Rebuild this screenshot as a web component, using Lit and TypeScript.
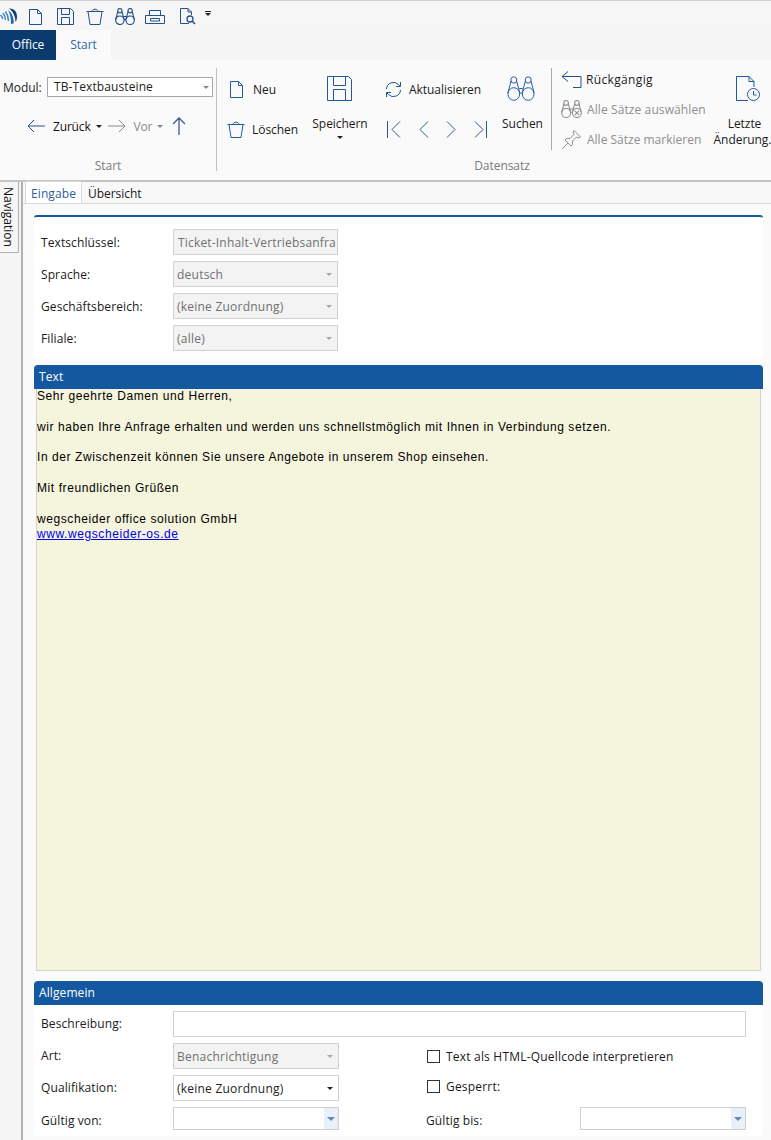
import { LitElement, html, css, svg } from "lit";
import { customElement } from "lit/decorators.js";

const ic = (w: number, h: number, body: unknown, cls = "") =>
  html`<svg class="ic ${cls}" width=${w} height=${h} viewBox="0 0 ${w} ${h}" fill="none" stroke="currentColor" stroke-width="1">${body}</svg>`;

const doc = (w = 13, h = 16) => ic(w, h, svg`<path d="M.5 .5H${w - 4.5}L${w - .5} 4.5V${h - .5}H.5Z"/><path d="M${w - 4.5} .5V4.5H${w - .5}"/>`);
const save = (s = 17) => {
  const k = s - .5;
  const a = Math.round(s * .24) + .5, b = Math.round(s * .7) + .5, c = Math.round(s * .34) + .5, d = Math.round(s * .52) + .5;
  return ic(s, s, svg`<path d="M.5 .5H${k - 3}L${k} 3.5V${k}H.5Z"/><path d="M${a} .5V${c}H${b}V.5M${a} ${k}V${d}H${k - a + .5}V${k}"/>`);
};
const trash = () => ic(18, 17, svg`<path d="M.5 3.5H17.5M2 3.5L4 16.5H14L16 3.5M6 3.5C6 .5 12 .5 12 3.5"/>`);
const binoc = (w: number, h: number, sw: number, mark = false) =>
  html`<svg class="ic" width=${w} height=${h} viewBox="0 0 30 25" fill="none" stroke="currentColor" stroke-width=${sw} preserveAspectRatio="none">
    <circle cx="7.300" cy="18" r="6.300"/><circle cx="22.700" cy="18" r="6.300"/>
    <circle cx="7.300" cy="4" r="3.200"/><circle cx="22.700" cy="4" r="3.200"/>
    <path d="M4.300 5L1 17M10.300 5L13.500 16M25.700 5L29 17M19.700 5L16.500 16M13.200 12.500H16.800M13.500 17H16.500"/>
    ${mark ? svg`<path d="M19.500 15L26 21M26 15L19.500 21"/>` : ""}
  </svg>`;
const printer = () => ic(20, 14, svg`<path d="M4.500 5V.5H15.500V5M.5 5.500H19.500V13.500H.5ZM5.500 8.500H14.500V11H5.500Z"/>`);
const preview = () => ic(17, 17, svg`<path d="M10 15.500H1.500V.5H9L12.500 4V7M9 .5V4H12.500"/><circle cx="11" cy="11" r="3" stroke-width="1.300"/><path d="M13 13L16 16" stroke-width="1.600"/>`);
const caret = (cls = "") => html`<i class="caret ${cls}"></i>`;
const arrowL = () => ic(18, 14, svg`<path d="M18 7H1M7 1L1 7L7 13"/>`);
const arrowR = () => ic(18, 14, svg`<path d="M0 7H17M11 1L17 7L11 13"/>`);
const arrowU = () => ic(16, 18, svg`<path stroke-width="1.300" d="M8 18V1M2 7L8 1L14 7"/>`);
const refresh = () => ic(17, 17, svg`<path d="M1.500 8A7 7 0 0 1 13.500 3.500L15 5M15.500 1V5.500H11M15.500 9A7 7 0 0 1 3.500 13.500L2 12M1.500 16V11.500H6"/>`);
const first = () => ic(14, 17, svg`<path d="M.5 0V17M13 .5L5 8.500L13 16.500"/>`);
const prev = () => ic(11, 17, svg`<path d="M10 .5L2 8.500L10 16.500"/>`);
const next = () => ic(11, 17, svg`<path d="M1 .5L9 8.500L1 16.500"/>`);
const last = () => ic(13, 17, svg`<path d="M12.500 0V17M1 .5L9 8.500L1 16.500"/>`);
const undo = () => ic(21, 17, svg`<path d="M20 5.500H1M7 .5L1 5.500L7 10.500M20 5.500V16.500H12"/>`);
const pin = () => ic(19, 19, svg`<path d="M12 .5L18.500 7L16.500 8L14.500 7L10.500 11L10.500 14.500L9 16L3 10L4.500 8.500L8 8.500L12 4.500L11 2.500ZM6 13L.5 18.500"/>`);
const clockDoc = () => html`<svg class="ic" width="24" height="26" viewBox="0 0 24 26" fill="none" stroke="currentColor" stroke-width="1">
  <path d="M12 24.500H.5V.5H13L18 5.500V11M13 .5V5.500H18"/><circle cx="17.500" cy="18.500" r="6"/><path d="M17.500 15V19H20.500"/></svg>`;
const logo = () => html`<svg class="logo" width="18" height="18" viewBox="0 0 18 18" fill="none">
  <path d="M9 1.500C14 1 17.500 5 17 10.500C16.800 12.500 16.200 14 15.500 15C15.500 9.500 13.500 5 9 1.500Z" fill="#123f78"/>
  <path d="M13.800 16C14 11 12 6 8 3C10 7 11 11 11 17C12.200 17 13 16.600 13.800 16Z" fill="#2a6cb0"/>
  <g stroke="#3f83c6" stroke-width="1.400"><path d="M5.500 4.500C7.500 7.500 8.500 11 8.500 14M3 6C4.500 8 5.500 10.500 5.500 13M.5 8C1.500 9 2.500 10.500 2.800 12"/></g>
</svg>`;

@customElement("app-root")
export class AppRoot extends LitElement {
  static styles = css`
    :host { display: block; width: 771px; height: 1140px; overflow: hidden; background: #f5f5f5;
      font: 12px/16px "Open Sans", sans-serif; color: #1a1a1a; letter-spacing: -.05px; }
    * { box-sizing: border-box; }
    .ic { display: block; flex: none; }
    .caret { display: block; width: 0; height: 0; border: 3px solid transparent; border-top: 3px solid #222; border-bottom: 0; flex: none; }
    .caret.grey { border-top-color: #888; }
    .caret.pale { border-top-color: #a8a8a8; }
    .caret.blue { border-top-color: #6e86b4; border-width: 4px 4px 0; }

    .qat { height: 30px; border-top: 1px solid #d0d0d0; display: grid; align-items: center; color: #24508c;
      grid-template-columns: 29px 28px 29px 29px 30px 34px 26px auto; background: #f6f6f6; }
    .qat .ic { margin-top: 2px; }
    .qcaret { display: flex; flex-direction: column; gap: 1px; align-items: flex-start; margin-top: -4px; }
    .qcaret b { width: 6px; height: 1px; background: #222; }

    .tabs { height: 30px; display: flex; background: #f5f5f5; }
    .tab { display: flex; align-items: center; justify-content: center; }
    .office { width: 56px; background: #0b3a6e; color: #fff; }
    .start { width: 55px; background: #fafafa; color: #2c6aa8; }

    .ribbon { height: 122px; display: flex; background: #fafafa; border-bottom: 2px solid #c4c4c4; }
    .sep { width: 1px; margin-top: 8px; flex: none; }
    .sep.a { height: 103px; background: #b4c2d4; }
    .sep.b { height: 82px; background: #a8a8a8; }
    .group { display: flex; flex-direction: column; flex: none; }
    .body { height: 97px; display: flex; }
    .glabel { text-align: center; color: #7a7a7a; padding-top: 1px; }

    .g1 { width: 216px; }
    .g1 .body { flex-direction: column; }
    .modul { display: flex; align-items: center; margin: 16px 0 0 3px; height: 22px; gap: 5px; }
    .modul > span { padding-top: 2px; width: 39px; }
    .select { flex: none; width: 166px; height: 20px; background: #fff; border: 1px solid #a8a8a8; padding: 0 3px 0 6px;
      display: flex; align-items: center; justify-content: space-between; color: #222; letter-spacing: .1px; }
    .nav1 { display: flex; align-items: center; margin: 18px 0 0 27px; color: #24508c; height: 20px; }
    .nav1 .t { margin: 0 5px 0 8px; color: #111; padding-top: 2px; letter-spacing: -.17px; }
    .nav1 .off { color: #8a8a8a; }
    .nav1 .off .t { color: #8a8a8a; }
    .nav1 .up { margin-left: 8px; color: #3f5a94; }
    .nav1 .fw { margin-left: 6px; display: flex; align-items: center; }

    .g2 { width: 334px; }
    .g2 .glabel { padding-left: 236px; }
    .col { display: flex; flex-direction: column; flex: none; }
    .stack { padding-top: 19px; gap: 20px; }
    .row { display: flex; align-items: center; height: 20px; color: #1f5a9c; }
    .row span { color: #1a1a1a; padding-top: 2px; }
    .neu { margin-left: 10px; width: 85px; }
    .neu .row .ic { margin-left: 3px; }
    .neu .row span { margin-left: 10px; }
    .neu .row.tr .ic { margin-left: 0; }
    .neu .row.tr span { margin-left: 7px; }
    .big { align-items: center; padding-top: 16px; color: #1f5a9c; }
    .big span { color: #1a1a1a; display: block; text-align: center; white-space: nowrap; }
    .big .bt { margin-top: 15px; }
    .big .caret { margin-top: 4px; }
    .speichern { width: 56px; }
    .speichern .ic { margin-right: 1px; }
    .akt { margin-left: 16px; width: 100px; }
    .akt .row > .ic { margin-left: 1px; }
    .akt .row > span { margin-left: 7px; }
    .pager { color: #2f5596; padding: 1px 0 0 3px; gap: 17px; }
    .akt .pager.row .ic { margin-left: 0; }
    .suchen { margin-left: 17px; width: 43px; }
    .suchen .ic { margin-right: 3px; }

    .g3 { flex: 1; min-width: 0; }
    .stack3 { padding-top: 9px; gap: 10px; width: 151px; margin-left: 9px; }
    .stack3 .row { color: #24508c; }
    .stack3 .row span { margin-left: 5px; letter-spacing: .1px; }
    .stack3 .row .undo { letter-spacing: .35px; margin-left: 4px; }
    .stack3 .dis, .stack3 .dis span { color: #8e8e8e; }
    .stack3 .pinr .ic { margin: 0 1px; }
    .stack3 .pinr span { letter-spacing: 0; }
    .lastc { width: 59px; margin-left: 1px; }
    .lastc .ic { margin-left: 10px; }
    .lastc .bt { margin: 14px 0 0 4px; }

    .main { display: flex; height: 958px; }
    .side { width: 23px; border-right: 2px solid #b0b0b0; background: #f5f5f5; flex: none; }
    .navtab { writing-mode: vertical-rl; width: 19px; height: 71px; background: #f6f6f6; border: 1px solid #b0b0b0; border-left: 0; border-top: 0;
      display: flex; align-items: center; justify-content: center; color: #111; letter-spacing: 0; padding-right: 2px; }
    .content { flex: 1; min-width: 0; background: #fafafa; }
    .tabbar { display: flex; height: 22px; border-bottom: 1px solid #d8d8d8; align-items: flex-end; padding-left: 2px; background: #f8f8f8; }
    .t1 { width: 57px; height: 22px; background: #fff; border: 1px solid #d8d8d8; border-bottom: 0; display: flex; align-items: center; justify-content: center; color: #2d5f9e; padding-top: 2px; letter-spacing: .1px; }
    .t2 { margin-left: 6px; height: 21px; display: flex; align-items: center; padding-top: 2px; }

    .panel { width: 729px; margin-left: 11px; background: #fff; }
    .p1 { margin-top: 11px; border-top: 2px solid #14589f; border-radius: 3px 3px 0 0; height: 143px; padding-top: 12px; }
    .form1 { display: grid; grid-template-columns: 132px 165px; grid-auto-rows: 26px; row-gap: 6px; padding-left: 7px; align-items: center; }
    .lab { color: #1a1a1a; padding-top: 2px; letter-spacing: .1px; }
    .fld { height: 26px; border: 1px solid #d0d0d0; display: flex; align-items: center; justify-content: space-between; padding: 2px 5px 0 3px; white-space: nowrap; overflow: hidden; letter-spacing: .23px; }
    .fld .caret { margin-top: -2px; }
    .fld.dis { background: #f3f3f3; color: #707070; }
    .fld.dis.tx { padding-left: 4px; letter-spacing: .18px; }
    .fld.on { color: #222; }

    .hdr { height: 24px; background: #14589f; color: #fff; border-radius: 4px 4px 0 0; padding-left: 5px; display: flex; align-items: center; letter-spacing: .1px; }
    .texthd { width: 729px; margin: 7px 0 0 11px; }
    .textbox { width: 725px; height: 582px; margin-left: 13px; background: #f5f4dc; border: 1px solid #d4d4c8; border-top: 0;
      font: 12px/15.3px "Liberation Sans", sans-serif; color: #000; letter-spacing: .58px; }
    .textbox div { min-height: 15.3px; }
    .textbox .sig { margin-top: 1px; }
    .textbox .lnk { margin-top: -1px; }
    .textbox a { color: #0000ee; text-decoration: underline; }

    .p2 { margin-top: 10px; border-radius: 4px; height: 155px; }
    .form2 { display: grid; grid-template-columns: 132px 166px 88px 153px 166px; padding: 6px 0 0 7px; grid-template-rows: 26px 26px 26px 23px; row-gap: 6px; align-items: center; }
    .form2 .lab { padding-top: 0; }
    .form2 .lab.low { padding-top: 4px; }
    .form2 .lab.bis { margin-left: -1px; }
    .wide { grid-column: 2 / 6; }
    .chk { grid-column: 4 / 6; display: flex; align-items: center; gap: 6px; letter-spacing: .2px; }
    .chk span { padding-top: 2px; }
    .chk.top { align-self: start; margin-top: 2px; }
    .chk i { width: 13px; height: 13px; border: 1px solid #333; background: #fff; flex: none; }
    .fld.dt { height: 23px; padding: 0; justify-content: flex-end; }
    .fld.dt .caret { margin-top: 0; }
    .drop { width: 14px; height: 100%; background: #e8f0fa; display: flex; align-items: center; justify-content: center; }
  `;

  render() {
    return html`
      <div class="qat">
        ${logo()}${doc()}${save()}${trash()}${binoc(20, 17, 1.700)}${printer()}${preview()}
        <div class="qcaret"><b></b>${caret()}</div>
      </div>
      <div class="tabs"><div class="tab office">Office</div><div class="tab start">Start</div></div>
      <div class="ribbon">
        <div class="group g1">
          <div class="body">
            <div class="modul"><span>Modul:</span><div class="select">TB-Textbausteine ${caret("grey")}</div></div>
            <div class="nav1">
              ${arrowL()}<span class="t">Zurück</span>${caret()}
              <div class="fw off">${arrowR()}<span class="t">Vor</span>${caret("grey")}</div>
              <div class="up">${arrowU()}</div>
            </div>
          </div>
          <div class="glabel">Start</div>
        </div>
        <div class="sep a"></div>
        <div class="group g2">
          <div class="body">
            <div class="col stack neu">
              <div class="row">${doc(13, 17)}<span>Neu</span></div>
              <div class="row tr">${trash()}<span>Löschen</span></div>
            </div>
            <div class="col big speichern">${save(25)}<span class="bt">Speichern</span>${caret()}</div>
            <div class="col stack akt">
              <div class="row">${refresh()}<span>Aktualisieren</span></div>
              <div class="row pager">${first()}${prev()}${next()}${last()}</div>
            </div>
            <div class="col big suchen">${binoc(28, 25, 1)}<span class="bt">Suchen</span></div>
          </div>
          <div class="glabel">Datensatz</div>
        </div>
        <div class="sep b"></div>
        <div class="group g3">
          <div class="body">
            <div class="col stack3">
              <div class="row">${undo()}<span class="undo">Rückgängig</span></div>
              <div class="row dis">${binoc(21, 18, 1.500, true)}<span>Alle Sätze auswählen</span></div>
              <div class="row dis pinr">${pin()}<span>Alle Sätze markieren</span></div>
            </div>
            <div class="col big lastc">${clockDoc()}<span class="bt">Letzte</span><span>Änderung.</span></div>
          </div>
        </div>
      </div>
      <div class="main">
        <div class="side"><div class="navtab">Navigation</div></div>
        <div class="content">
          <div class="tabbar"><div class="t1">Eingabe</div><div class="t2">Übersicht</div></div>
          <div class="panel p1">
            <div class="form1">
              <div class="lab">Textschlüssel:</div><div class="fld dis tx">Ticket-Inhalt-Vertriebsanfra</div>
              <div class="lab">Sprache:</div><div class="fld dis">deutsch ${caret("pale")}</div>
              <div class="lab">Geschäftsbereich:</div><div class="fld dis">(keine Zuordnung) ${caret("pale")}</div>
              <div class="lab">Filiale:</div><div class="fld dis">(alle) ${caret("pale")}</div>
            </div>
          </div>
          <div class="hdr texthd">Text</div>
          <div class="textbox">
            <div>Sehr geehrte Damen und Herren,</div><div></div>
            <div>wir haben Ihre Anfrage erhalten und werden uns schnellstmöglich mit Ihnen in Verbindung setzen.</div><div></div>
            <div>In der Zwischenzeit können Sie unsere Angebote in unserem Shop einsehen.</div><div></div>
            <div>Mit freundlichen Grüßen</div><div></div>
            <div class="sig">wegscheider office solution GmbH</div>
            <div class="lnk"><a href="#">www.wegscheider-os.de</a></div>
          </div>
          <div class="panel p2">
            <div class="hdr">Allgemein</div>
            <div class="form2">
              <div class="lab">Beschreibung:</div><div class="fld wide"></div>
              <div class="lab">Art:</div><div class="fld dis">Benachrichtigung ${caret("pale")}</div><div></div>
              <div class="chk"><i></i><span>Text als HTML-Quellcode interpretieren</span></div>
              <div class="lab">Qualifikation:</div><div class="fld on">(keine Zuordnung) ${caret()}</div><div></div>
              <div class="chk top"><i></i><span>Gesperrt:</span></div>
              <div class="lab low">Gültig von:</div><div class="fld dt"><div class="drop">${caret("blue")}</div></div><div></div>
              <div class="lab low bis">Gültig bis:</div><div class="fld dt"><div class="drop">${caret("blue")}</div></div>
            </div>
          </div>
        </div>
      </div>
    `;
  }
}
